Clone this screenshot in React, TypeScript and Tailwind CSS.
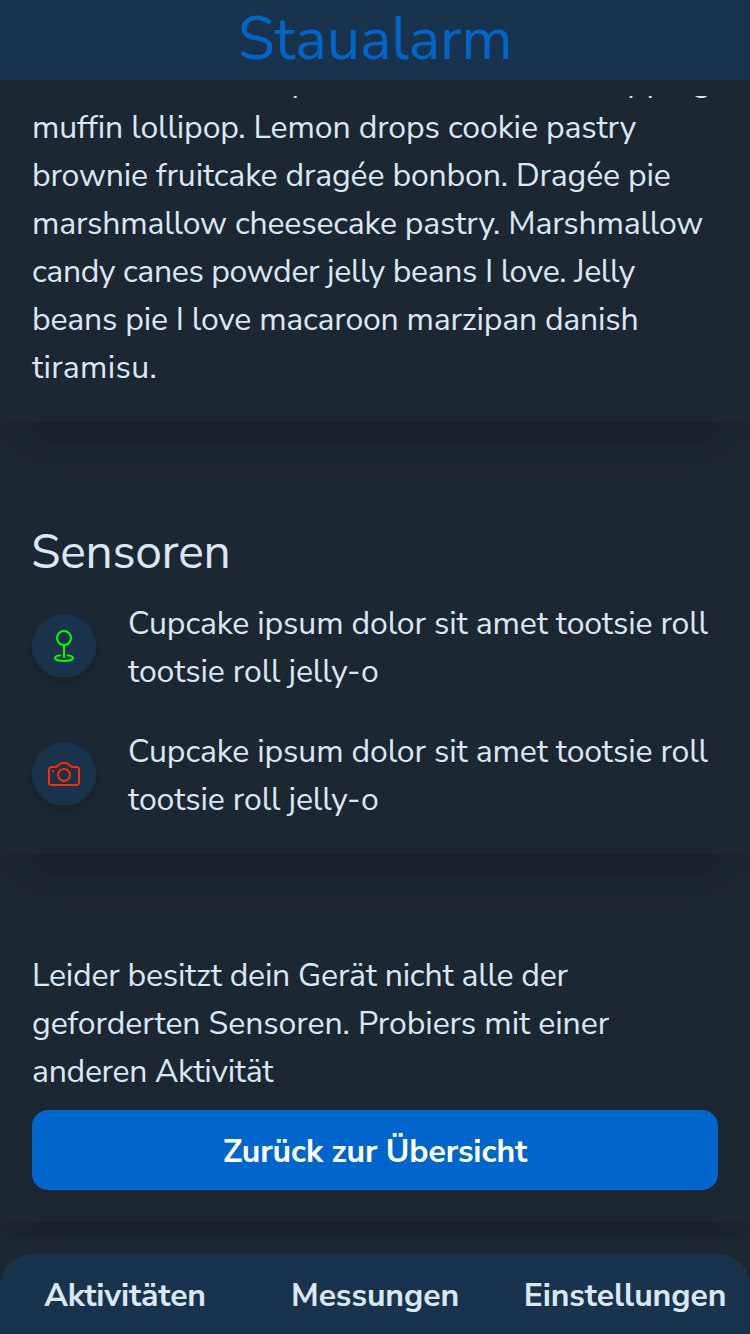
const card =
  "w-full shrink-0 px-8 shadow-[0_40px_50px_-10px_rgba(0,0,0,0.1),0_20px_20px_-10px_rgba(0,0,0,0.04)]";
const badge =
  "flex size-16 shrink-0 items-center justify-center rounded-full bg-[#1a334c] shadow-[0_8px_12px_-2px_rgba(0,0,0,0.1),0_4px_8px_-2px_rgba(0,0,0,0.06)]";

const intro = [
  { text: "Danish biscuit, cupcake marshmallow topping", tracking: "pt-0.5 -mb-0.5 tracking-[0.54px]" },
  { text: "muffin lollipop. Lemon drops cookie pastry", tracking: "tracking-[-0.11px]" },
  { text: "brownie fruitcake dragée bonbon. Dragée pie", tracking: "tracking-[-0.15px]" },
  { text: "marshmallow cheesecake pastry. Marshmallow", tracking: "tracking-[-0.18px]" },
  { text: "candy canes powder jelly beans I love. Jelly", tracking: "tracking-[-0.36px]" },
  { text: "beans pie I love macaroon marzipan danish", tracking: "tracking-[-0.2px]" },
  { text: "tiramisu.", tracking: "tracking-[0.31px]" },
];

const hint = [
  { text: "Leider besitzt dein Gerät nicht alle der", tracking: "tracking-[-0.22px]" },
  { text: "geforderten Sensoren. Probiers mit einer", tracking: "tracking-[-0.07px]" },
  { text: "anderen Aktivität", tracking: "tracking-[-0.3px]" },
];

function PinIcon() {
  return (
    <svg viewBox="0 0 32 32" className="size-8 text-[#00ff00]" fill="none" stroke="currentColor" strokeWidth="2">
      <circle cx="16" cy="8" r="7" />
      <path d="M16 15v13" />
      <path d="M13 25.2C9.6 25.6 7 26.7 7 28c0 1.7 4 3 9 3s9-1.3 9-3c0-1.3-2.6-2.4-6-2.8" />
    </svg>
  );
}

function CameraIcon() {
  return (
    <svg viewBox="0 0 32 32" className="size-8 text-[#ff2d00]" fill="none" stroke="currentColor" strokeWidth="2">
      <path d="M3.5 9h4c1.5 0 2-.6 3-1.6l1-1C12.4 5.5 13 5 14 5h4c1 0 1.6.5 2.5 1.4l1 1c1 1 1.5 1.6 3 1.6h4A2.5 2.5 0 0 1 31 11.5v13a2.5 2.5 0 0 1-2.5 2.5h-25A2.5 2.5 0 0 1 1 24.5v-13A2.5 2.5 0 0 1 3.5 9z" />
      <circle cx="16" cy="17" r="6" />
      <path d="M4 13h2" />
    </svg>
  );
}

const sensors = [
  { id: "pin", icon: <PinIcon /> },
  { id: "camera", icon: <CameraIcon /> },
];

function Lines({ lines }: { lines: { text: string; tracking: string }[] }) {
  return (
    <p>
      {lines.map((line) => (
        <span key={line.text} className={`block translate-y-0.5 whitespace-nowrap ${line.tracking}`}>
          {line.text}
        </span>
      ))}
    </p>
  );
}

export default function App() {
  return (
    <div className="flex h-[1334px] w-[750px] flex-col overflow-hidden bg-[#1d2732] font-['Nunito_Sans','Noto_Sans',sans-serif] text-[32px] leading-[48px] text-[#dbe7f3]">
      <header className="flex h-20 shrink-0 items-center justify-center bg-[#1a334c]">
        <h1 className="-mt-0.5 text-[60px] leading-[80px] tracking-[-0.35px] text-[#0066cc]">Staualarm</h1>
      </header>

      <main className="mt-4 flex h-[1142px] shrink-0 flex-col justify-end gap-16 overflow-hidden">
        <section className={`${card} pb-8`}>
          <Lines lines={intro} />
        </section>

        <section className={`${card} pt-[30px] pb-8`}>
          <h2 className="-ml-px text-[48px] leading-[72px] tracking-[-0.3px]">Sensoren</h2>
          <ul className="mt-2.5 flex flex-col gap-8">
            {sensors.map((sensor) => (
              <li key={sensor.id} className="flex items-center gap-8">
                <span className={badge}>{sensor.icon}</span>
                <p className="translate-y-0.5 whitespace-nowrap">
                  <span className="block tracking-[-0.13px]">Cupcake ipsum dolor sit amet tootsie roll</span>
                  <span className="block tracking-[-0.11px]">tootsie roll jelly-o</span>
                </p>
              </li>
            ))}
          </ul>
        </section>

        <section className={`${card} mb-4 py-8`}>
          <Lines lines={hint} />
          <button className="mt-4 flex h-20 w-full items-center justify-center rounded-2xl bg-[#0066cc] pt-1 font-bold tracking-[-0.13px] text-white">
            Zurück zur Übersicht
          </button>
        </section>
      </main>

      <nav className="mt-4 grid h-20 shrink-0 grid-cols-3 items-center rounded-t-[32px] bg-[#1a334c] pt-1 text-center font-bold">
        <a className="tracking-[-0.2px]">Aktivitäten</a>
        <a className="tracking-[-0.1px]">Messungen</a>
        <a className="tracking-[-0.1px]">Einstellungen</a>
      </nav>
    </div>
  );
}
